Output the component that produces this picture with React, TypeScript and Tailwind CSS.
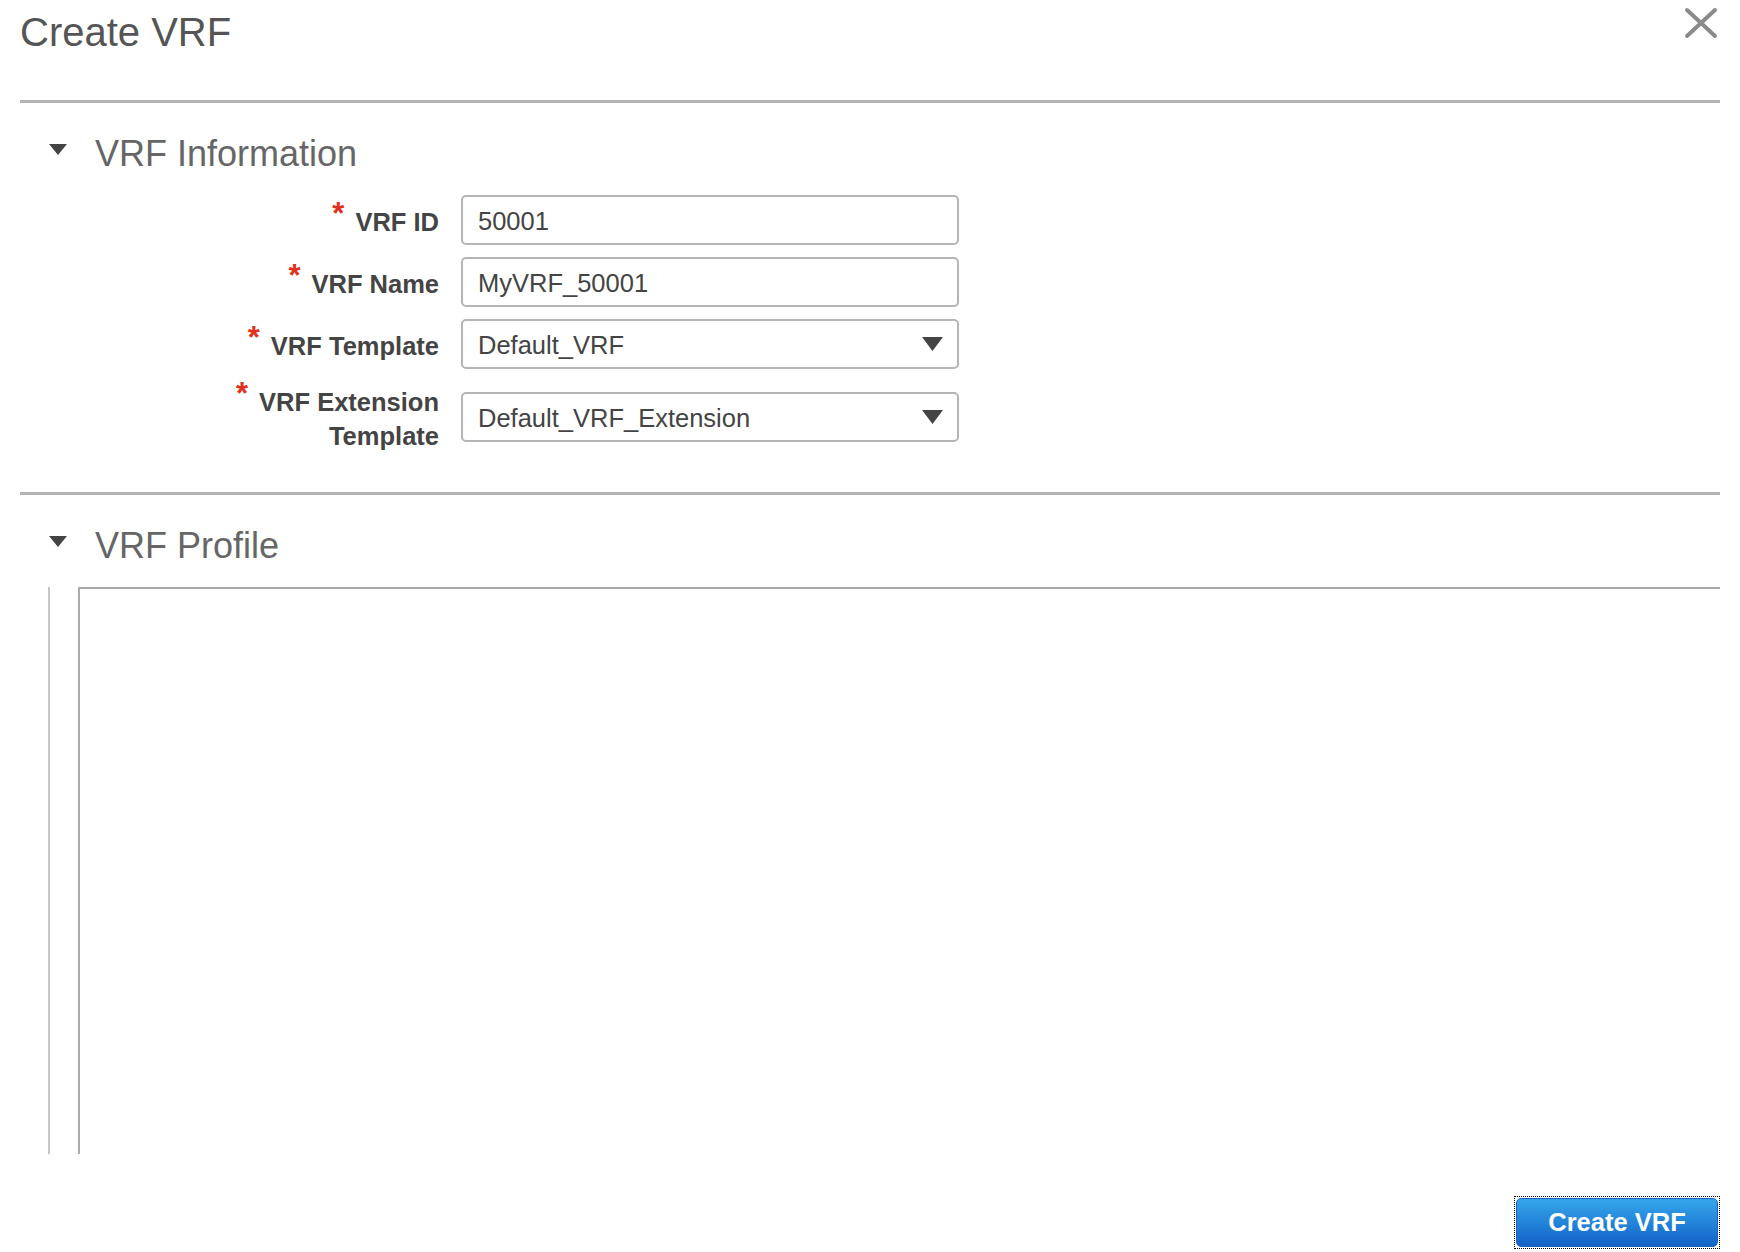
import { Fragment } from "react";

type Field = {
  label: string[];
  value: string;
  select?: boolean;
};

const fields: Field[] = [
  { label: ["VRF ID"], value: "50001" },
  { label: ["VRF Name"], value: "MyVRF_50001" },
  { label: ["VRF Template"], value: "Default_VRF", select: true },
  { label: ["VRF Extension", "Template"], value: "Default_VRF_Extension", select: true },
];

const Caret = () => (
  <svg width="18" height="11" viewBox="0 0 18 11" className="mt-[8px] shrink-0">
    <polygon points="0,0 18,0 9,11" fill="#444" />
  </svg>
);

const SectionHeader = ({ title, className }: { title: string; className: string }) => (
  <div className={`flex items-start pl-[29px] ${className}`}>
    <Caret />
    <h2 className="ml-[28px] text-[36px] leading-[36px] text-[#666]">{title}</h2>
  </div>
);

const FieldRow = ({ field }: { field: Field }) => (
  <div className="flex items-center">
    <label className="w-[419px] pt-[4px] text-right text-[25.5px] font-bold leading-[34px] text-[#444]">
      <span className="mr-[11px] align-[7px] text-[31px] leading-[0] text-[#e0301e]">*</span>
      {field.label.map((line, i) => (
        <Fragment key={line}>
          {i > 0 && <br />}
          {line}
        </Fragment>
      ))}
    </label>
    <div className="ml-[22px] flex h-[50px] w-[498px] items-center justify-between rounded-[5px] border-2 border-[#b5b5b5] bg-white pl-[15px] pr-[14px] pt-[3px]">
      <span className="text-[25.5px] text-[#444]">{field.value}</span>
      {field.select && (
        <svg width="21" height="14" viewBox="0 0 21 14" className="-mt-[3px]">
          <polygon points="0,0 21,0 10.5,14" fill="#444" />
        </svg>
      )}
    </div>
  </div>
);

export default function App() {
  return (
    <div className="flex h-[1252px] w-[1740px] flex-col overflow-hidden bg-white px-[20px] font-['Liberation_Sans',Arial,sans-serif]">
      <div className="flex h-[100px] items-start justify-between">
        <h1 className="pt-[12px] text-[40px] leading-[40px] text-[#555]">Create VRF</h1>
        <svg width="34" height="32" viewBox="0 0 34 32" className="mr-[2px] mt-[7px]">
          <path d="M3 3 L31 29 M31 3 L3 29" stroke="#8a8a8a" strokeWidth="4" strokeLinecap="round" />
        </svg>
      </div>
      <div className="h-[3px] bg-[#b3b3b3]" />

      <SectionHeader title="VRF Information" className="mt-[33px]" />

      <div className="mt-[23px] flex flex-col gap-[12px]">
        {fields.map((f) => (
          <FieldRow key={f.value} field={f} />
        ))}
      </div>

      <div className="mt-[39px] h-[3px] bg-[#b3b3b3]" />

      <SectionHeader title="VRF Profile" className="mt-[33px]" />

      <div className="mt-[23px] flex h-[567px] pl-[28px]">
        <div className="w-[2px] bg-[#c6c6c6]" />
        <div className="ml-[28px] flex-1 border-l-2 border-t-2 border-[#ababab]" />
      </div>

      <div className="mt-[42px] flex justify-end">
        <div className="border border-dotted border-black p-[1px]">
          <button className="h-[49px] w-[202px] rounded-[5px] border border-[#1b62b8] bg-gradient-to-b from-[#36a6ec] to-[#1462c6] text-[25.5px] font-bold text-white">
            Create VRF
          </button>
        </div>
      </div>
    </div>
  );
}
